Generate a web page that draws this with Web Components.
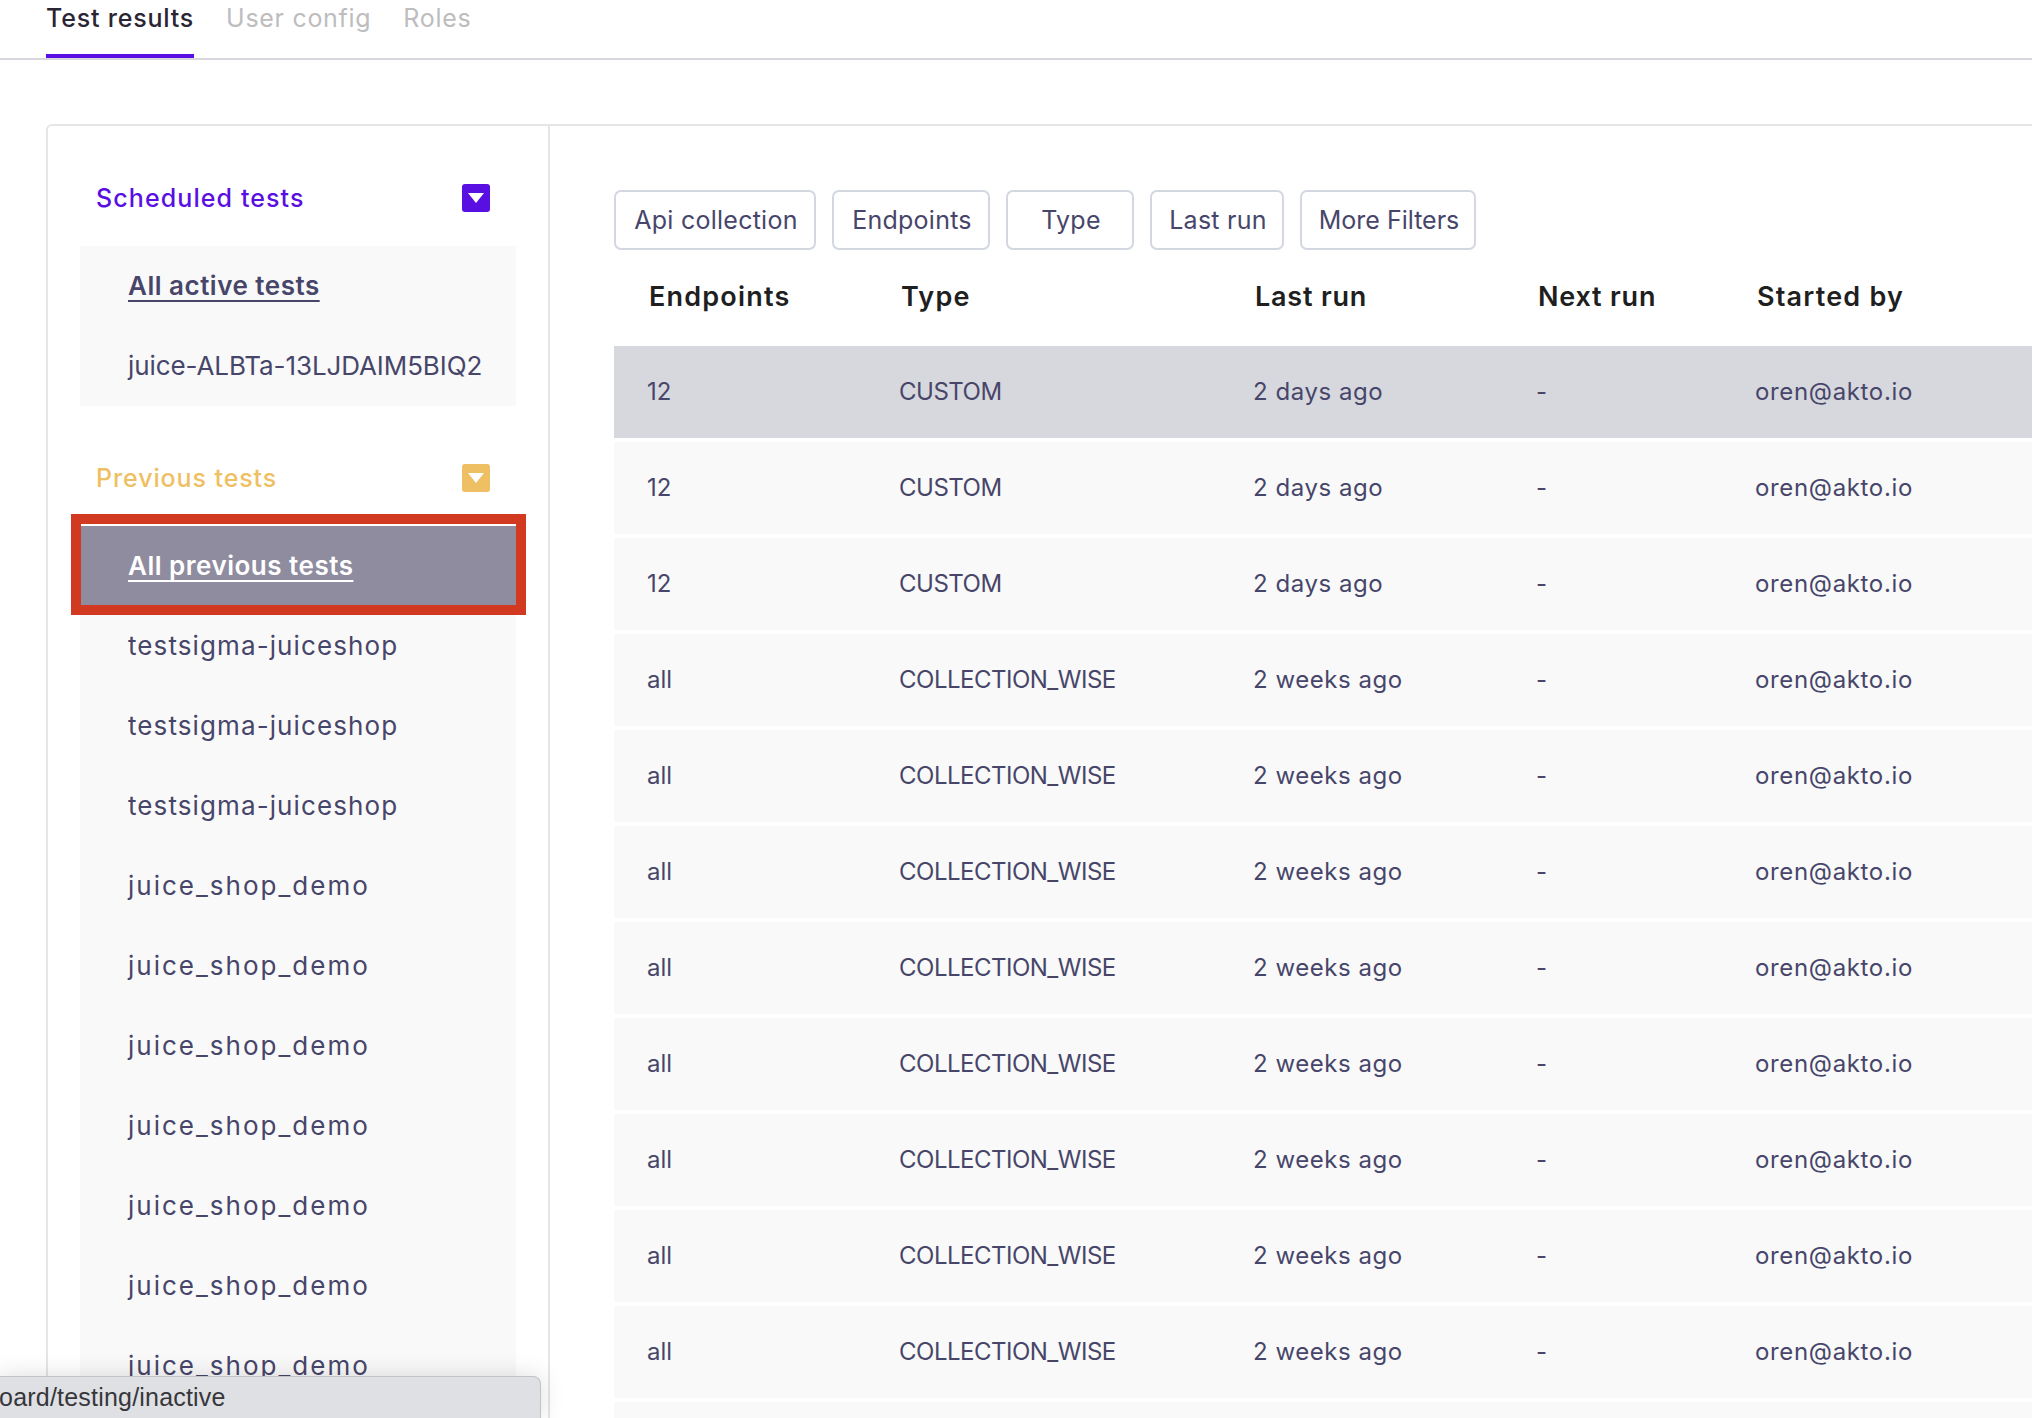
<!DOCTYPE html>
<html>
<head>
<meta charset="utf-8">
<style>
  html, body { margin: 0; height: 1418px; overflow: hidden; background: #fff; }
  body { font-family: Inter, "Open Sans", sans-serif; color: #47466a; }
</style>
</head>
<body>
<app-page></app-page>
<script>
class AppTabs extends HTMLElement {
  constructor() {
    super();
    this.attachShadow({ mode: "open" });
  }
  connectedCallback() {
    this.shadowRoot.innerHTML = `
      <style>
        :host { display: flex; gap: 32px; height: 58px; padding-left: 46px; border-bottom: 2px solid #d8d8de; }
        span { height: 54px; line-height: 36px; font-size: 25px; color: #bdbdc0; letter-spacing: .7px; }
        .on { color: #2b2533; font-weight: 500; letter-spacing: .8px; border-bottom: 4px solid #5a0fe2; }
      </style>
      <span class="on">Test results</span><span>User config</span><span>Roles</span>
    `;
  }
}

class SideSection extends HTMLElement {
  constructor() {
    super();
    this.attachShadow({ mode: "open" });
  }
  connectedCallback() {
    const color = this.getAttribute("color");
    this.shadowRoot.innerHTML = `
      <style>
        :host { display: block; margin-bottom: 44px; }
        .head { display: flex; align-items: center; justify-content: space-between; height: 56px; padding: 0 26px 0 16px; margin-bottom: 20px; color: ${color}; font-size: 25px; font-weight: 500; letter-spacing: 1px; }
        .box { width: 28px; height: 28px; border-radius: 3px; background: ${color}; display: flex; align-items: center; justify-content: center; }
        .list { background: #f9f9f9; }
      </style>
      <div class="head">
        <span style="letter-spacing:${this.getAttribute("spacing")}px">${this.getAttribute("title")}</span>
        <div class="box"><svg width="16" height="10" viewBox="0 0 16 10"><path d="M0 0H16L8 10Z" fill="#fff"/></svg></div>
      </div>
      <div class="list"><slot></slot></div>
    `;
  }
}

class SideItem extends HTMLElement {
  constructor() {
    super();
    this.attachShadow({ mode: "open" });
  }
  connectedCallback() {
    this.shadowRoot.innerHTML = `
      <style>
        :host { display: block; position: relative; height: 80px; line-height: 80px; padding-left: 48px; font-size: 26px; color: #47466a; white-space: nowrap; }
        :host([all]) { font-weight: 600; letter-spacing: .5px; text-decoration: underline; text-underline-offset: 5px; text-decoration-thickness: 2px; }
        :host([selected]) { background: #8f8ca0; color: #fff; }
        /* red annotation box from the screenshot */
        :host([selected])::after { content: ""; position: absolute; left: -9px; right: -10px; top: -12px; bottom: -9px; border: 10px solid #d13a20; }
      </style>
      <slot></slot>
    `;
  }
}

class FilterChip extends HTMLElement {
  constructor() {
    super();
    this.attachShadow({ mode: "open" });
  }
  connectedCallback() {
    this.shadowRoot.innerHTML = `
      <style>
        :host { display: flex; align-items: center; justify-content: center; box-sizing: border-box; height: 60px; padding-left: 2px; border: 2px solid #d3d7e0; border-radius: 7px; font-size: 25px; letter-spacing: .25px; color: #47466a; white-space: nowrap; }
      </style>
      <slot></slot>
    `;
  }
}

class ResultRow extends HTMLElement {
  constructor() {
    super();
    this.attachShadow({ mode: "open" });
  }
  connectedCallback() {
    const cells = (this.getAttribute("cells") || "").split("|");
    this.shadowRoot.innerHTML = `
      <style>
        :host { display: grid; grid-template-columns: 252px 354px 283px 219px 1fr; align-items: center; box-sizing: border-box; height: 92px; margin-bottom: 4px; padding: 0 0 2px 33px; background: #f9f9f9; font-size: 24px; color: #47466a; white-space: nowrap; }
        :host([selected]) { background: #d7d8de; }
        span:nth-of-type(2) { letter-spacing: -.5px; }
        span:nth-of-type(3) { letter-spacing: .55px; }
        span:nth-of-type(5) { letter-spacing: .65px; }
        :host([head]) { height: 96px; margin: 0; padding: 0 0 4px 35px; background: none; font-size: 27px; font-weight: 600; color: #1f1f1f; }
        :host([head]) span { letter-spacing: 1.2px; }
        :host([head]) span:nth-of-type(3), :host([head]) span:nth-of-type(4) { letter-spacing: .8px; }
      </style>
      ${cells.map((c) => `<span>${c}</span>`).join("")}
    `;
  }
}

class StatusTip extends HTMLElement {
  constructor() {
    super();
    this.attachShadow({ mode: "open" });
  }
  connectedCallback() {
    this.shadowRoot.innerHTML = `
      <style>
        :host { position: absolute; left: -2px; bottom: 0; box-sizing: border-box; width: 543px; height: 42px; line-height: 40px; overflow: hidden; background: #dfe0e4; border: 1px solid #c2c3c8; border-bottom: 0; border-top-right-radius: 8px; box-shadow: 0 0 24px rgba(0,0,0,.14); font-family: "Liberation Sans", sans-serif; font-size: 25px; letter-spacing: .2px; color: #37373b; white-space: nowrap; }
        span { display: inline-block; margin-left: -14px; }
      </style>
      <span>board/testing/inactive</span>
    `;
  }
}

class AppPage extends HTMLElement {
  constructor() {
    super();
    this.attachShadow({ mode: "open" });
  }
  connectedCallback() {
    const previous = [];
    for (let i = 0; i < 3; i++) previous.push(["testsigma-juiceshop", 1.1]);
    for (let i = 0; i < 7; i++) previous.push(["juice_shop_demo", 2]);

    const rows = [];
    for (let i = 0; i < 3; i++) rows.push("12|CUSTOM|2 days ago|-|oren@akto.io");
    for (let i = 0; i < 8; i++) rows.push("all|COLLECTION_WISE|2 weeks ago|-|oren@akto.io");
    rows.push(""); // only the top of this row is on screen

    this.shadowRoot.innerHTML = `
      <style>
        :host { display: block; position: relative; height: 1418px; overflow: hidden; }
        .wrap { padding: 64px 0 0 46px; }
        .card { display: flex; width: 2100px; height: 1400px; border: 2px solid #e5e5e5; border-right: 0; border-bottom: 0; border-top-left-radius: 6px; }
        .side { box-sizing: border-box; flex: none; width: 502px; padding: 44px 32px 0 32px; border-right: 2px solid #e5e5e5; }
        .main { flex: 1; padding: 64px 0 0 64px; }
        .chips { display: flex; gap: 16px; }
      </style>
      <app-tabs></app-tabs>
      <div class="wrap">
        <div class="card">
          <div class="side">
            <side-section title="Scheduled tests" spacing="1.1" color="#5a0fe2">
              <side-item all>All active tests</side-item>
              <side-item style="letter-spacing:-.1px">juice-ALBTa-13LJDAIM5BIQ2</side-item>
            </side-section>
            <side-section title="Previous tests" spacing=".9" color="#eebf63">
              <side-item all selected>All previous tests</side-item>
              ${previous.map((p) => `<side-item style="letter-spacing:${p[1]}px">${p[0]}</side-item>`).join("")}
            </side-section>
          </div>
          <div class="main">
            <div class="chips">
              <filter-chip style="width:202px">Api collection</filter-chip>
              <filter-chip style="width:158px">Endpoints</filter-chip>
              <filter-chip style="width:128px">Type</filter-chip>
              <filter-chip style="width:134px">Last run</filter-chip>
              <filter-chip style="width:176px;letter-spacing:0">More Filters</filter-chip>
            </div>
            <result-row head cells="Endpoints|Type|Last run|Next run|Started by"></result-row>
            ${rows.map((r, i) => `<result-row ${i === 0 ? "selected" : ""} cells="${r}"></result-row>`).join("")}
          </div>
        </div>
      </div>
      <status-tip></status-tip>
    `;
  }
}

customElements.define("app-tabs", AppTabs);
customElements.define("side-section", SideSection);
customElements.define("side-item", SideItem);
customElements.define("filter-chip", FilterChip);
customElements.define("result-row", ResultRow);
customElements.define("status-tip", StatusTip);
customElements.define("app-page", AppPage);
</script>
</body>
</html>
